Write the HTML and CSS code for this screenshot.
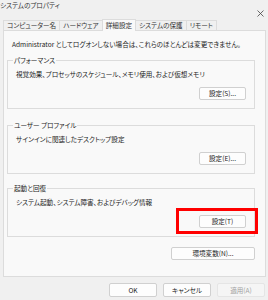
FILE: index.html
```html
<!DOCTYPE html>
<html lang="ja">
<head>
    <meta charset="UTF-8">
    <meta name="viewport" content="width=device-width, initial-scale=1.0">
    <title>システムのプロパティ</title>
    <link rel="stylesheet" href="styles.css">
</head>
<body>

    <div class="titlebar">
        <span class="title">システムのプロパティ</span>
        <svg class="close" width="7" height="7" viewBox="0 0 7 7">
            <path d="M0.5 0.5 L6.5 6.5 M6.5 0.5 L0.5 6.5" stroke="#444" stroke-width="0.8" fill="none"/>
        </svg>
    </div>

    <div class="tabs">
        <div class="tab">コンピューター名</div>
        <div class="tab">ハードウェア</div>
        <div class="tab active">詳細設定</div>
        <div class="tab">システムの保護</div>
        <div class="tab">リモート</div>
    </div>

    <div class="panel">
        <p class="notice">Administrator としてログオンしない場合は、これらのほとんどは変更できません。</p>

        <fieldset class="group">
            <legend>パフォーマンス</legend>
            <p class="desc">視覚効果、プロセッサのスケジュール、メモリ使用、および仮想メモリ</p>
            <div class="actions"><button class="btn">設定(S)...</button></div>
        </fieldset>

        <fieldset class="group profile">
            <legend>ユーザー プロファイル</legend>
            <p class="desc">サインインに関連したデスクトップ設定</p>
            <div class="actions"><button class="btn">設定(E)...</button></div>
        </fieldset>

        <fieldset class="group startup">
            <legend>起動と回復</legend>
            <p class="desc">システム起動、システム障害、およびデバッグ情報</p>
            <div class="actions"><button class="btn">設定(T)</button></div>
            <div class="highlight"></div>
        </fieldset>

        <div class="actions env">
            <button class="btn wide">環境変数(N)...</button>
        </div>
    </div>

    <div class="footer">
        <button class="btn footer-btn">OK</button>
        <button class="btn footer-btn">キャンセル</button>
        <button class="btn footer-btn disabled">適用(A)</button>
    </div>

</body>
</html>
```

FILE: styles.css
```css
body {
    font-family: "Noto Sans CJK JP", sans-serif;
    font-feature-settings: "palt";
    font-size: 6.6px;
    line-height: 9px;
    background-color: #f0f0f0;
    color: #1b1b1b;
    margin: 0;
    padding: 0;
    width: 268px;
    height: 300px;
    overflow: hidden;
}
p {
    margin: 0;
}
.titlebar {
    display: flex;
    justify-content: space-between;
    height: 19px;
    padding: 0 4px 0 0;
}
.title {
    align-self: flex-start;
    margin-top: 1px;
    color: #333;
}
.close {
    align-self: flex-end;
    margin-bottom: 2px;
}
.tabs {
    display: flex;
    align-items: flex-end;
    height: 11px;
    padding-left: 3px;
}
.tab {
    height: 9px;
    padding: 0 3px;
    border: 1px solid #dcdcdc;
    border-bottom: none;
    margin-right: -1px;
    background: #f0f0f0;
    color: #333;
}
.tab.active {
    height: 11px;
    line-height: 11px;
    background: #f9f9f9;
    position: relative;
    margin-bottom: -1px;
    z-index: 1;
}
.panel {
    width: 248px;
    height: 236px;
    margin-left: 3px;
    padding: 9px 10px 0 3px;
    background: #f9f9f9;
    border: 1px solid #dcdcdc;
}
.notice {
    padding-left: 5px;
}
.group {
    position: relative;
    margin: 7px 0 0 0;
    padding: 5px 8px 8px 8px;
    border: 1px solid #dcdcdc;
    min-width: 0;
}
.group.profile {
    margin-top: 12px;
}
.group.startup {
    margin-top: 10px;
}
.group legend {
    padding: 0 1px;
    margin-left: -3px;
}
.actions {
    display: flex;
    justify-content: flex-end;
    margin-top: 8px;
}
.btn {
    font-family: inherit;
    font-feature-settings: "palt";
    font-size: 6.6px;
    line-height: 11px;
    width: 47px;
    height: 13px;
    padding: 0;
    background: #fdfdfd;
    color: #1b1b1b;
    border: 1px solid #d0d0d0;
    border-radius: 2px;
}
.btn.wide {
    width: 84px;
}
.env {
    margin-top: 10px;
}
.highlight {
    position: absolute;
    left: 168px;
    top: 15px;
    width: 76px;
    height: 20px;
    border: 3px solid #ff0000;
}
.footer {
    display: flex;
    justify-content: flex-end;
    gap: 6px;
    padding: 6px 3px 0 0;
}
.footer-btn {
    width: 48px;
    height: 14px;
}
.footer-btn.disabled {
    color: #a0a0a0;
    background: #f5f5f5;
    border-color: #e5e5e5;
}
```
